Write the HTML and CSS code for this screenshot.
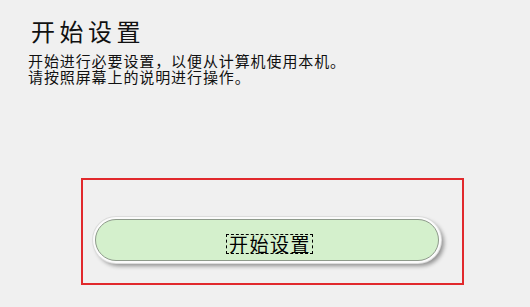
FILE: index.html
```html
<!DOCTYPE html>
<html>
<head>
    <meta charset="utf-8">
    <title>开始设置</title>
    <link rel="stylesheet" href="styles.css">
</head>
<body>
    <!-- En-tête -->
    <div class="header">
        <h1>开始设置</h1>
        <p class="intro">开始进行必要设置，以便从计算机使用本机。</p>
        <p class="intro">请按照屏幕上的说明进行操作。</p>
    </div>

    <!-- Zone du bouton -->
    <div class="start-box">
        <button type="button" class="start-btn"><span class="focus">开始设置</span></button>
    </div>
</body>
</html>
```

FILE: styles.css
```css
/* Styles généraux */
body {
    margin: 0;
    padding-top: 18px;
    background-color: #f0f0f0;
    font-family: "Noto Sans CJK SC", "Noto Sans", sans-serif;
    color: #111;
}

/* En-tête */
.header {
    padding-left: 28px;
}

.header h1 {
    margin: 0 0 9px;
    padding-left: 3px;
    font-size: 24px;
    font-weight: normal;
    line-height: 26px;
    letter-spacing: 4.5px;
}

.intro {
    margin: 0;
    font-size: 15px;
    line-height: 16px;
    letter-spacing: 0.9px;
    white-space: nowrap;
}

/* Zone du bouton */
.start-box {
    box-sizing: border-box;
    width: 383px;
    height: 107px;
    margin: 93px 0 0 81px;
    padding: 39px 0 0 12px;
    border: 2px solid #e1292c;
}

.start-btn {
    display: flex;
    justify-content: center;
    align-items: center;
    width: 344px;
    height: 42px;
    padding: 0;
    border: 1px solid #8e9a8b;
    border-radius: 21px;
    background: #d4f0cc;
    box-shadow: 0 0 0 2px #fbfbfb, 0 0 0 3px #dcdcdc, 3px 3px 4px 2px rgba(0, 0, 0, 0.4);
    font-family: inherit;
    font-size: 19px;
    color: #000;
    cursor: pointer;
}

.focus {
    margin: 7px 0 0 5px;
    padding: 0 1px 0 2px;
    border: 1px dashed #000;
    line-height: 18px;
    letter-spacing: 1.5px;
}
```
